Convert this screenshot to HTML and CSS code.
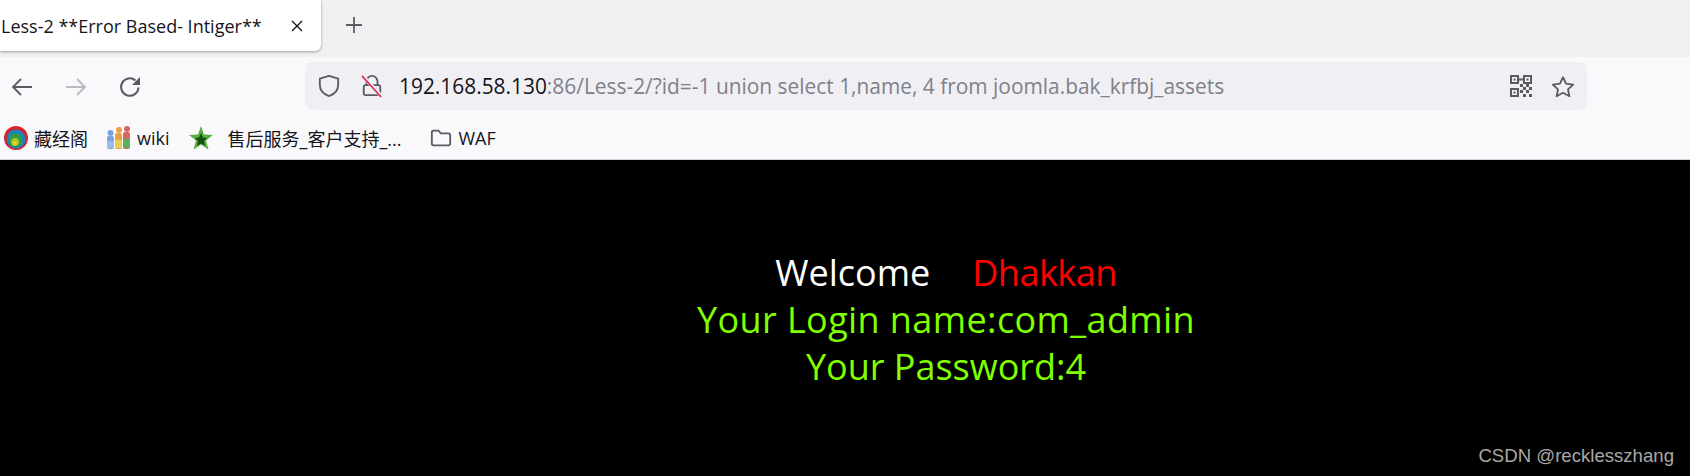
FILE: index.html
```html
<!DOCTYPE html>
<html lang="en">
<head>
    <meta charset="UTF-8">
    <title>Less-2 **Error Based- Intiger**</title>
    <link rel="stylesheet" href="styles.css">
</head>
<body>
    <div class="tab-strip">
        <div class="tab">
            <span class="tab-title">Less-2 **Error Based- Intiger**</span>
            <svg class="tab-close" width="12" height="12" viewBox="0 0 12 12"><path d="M1 1l10 10M11 1L1 11" stroke="#15141a" stroke-width="1.4" fill="none"/></svg>
        </div>
        <svg class="new-tab" width="18" height="18" viewBox="0 0 18 18"><path d="M9 1v16M1 9h16" stroke="#5b5b66" stroke-width="1.8" fill="none"/></svg>
    </div>

    <div class="toolbar">
        <div class="nav-buttons">
            <svg width="22" height="20" viewBox="0 0 22 20"><path d="M21 10H2M10 2l-8 8 8 8" stroke="#5b5b66" stroke-width="1.8" fill="none"/></svg>
            <svg width="22" height="20" viewBox="0 0 22 20"><path d="M1 10h19M12 2l8 8-8 8" stroke="#b9b9bf" stroke-width="1.8" fill="none"/></svg>
            <svg width="22" height="22" viewBox="0 0 22 22"><path d="M19.500 11.500a8.700 8.700 0 1 1-3-7" stroke="#5b5b66" stroke-width="2" fill="none"/><path d="M21 1v8h-8z" fill="#5b5b66"/></svg>
        </div>
        <div class="url-bar">
            <svg width="22" height="24" viewBox="0 0 24 26"><path d="M12 2l10 3v7c0 6-4 10-10 12C6 22 2 18 2 12V5z" stroke="#5b5b66" stroke-width="2" fill="none" stroke-linejoin="round"/></svg>
            <svg class="lock" width="22" height="24" viewBox="0 0 24 26"><path d="M6 12V8a6 6 0 0 1 12 0v4" stroke="#5b5b66" stroke-width="2" fill="none"/><rect x="3" y="12" width="18" height="11" rx="2" stroke="#5b5b66" stroke-width="2" fill="none"/><path d="M1 1l22 24" stroke="#f0f0f4" stroke-width="4"/><path d="M1 2l21 23" stroke="#e22850" stroke-width="1.8"/></svg>
            <div class="url-text"><span class="url-host">192.168.58.130</span>:86/Less-2/?id=-1 union select 1,name, 4 from joomla.bak_krfbj_assets</div>
            <svg width="22" height="22" viewBox="0 0 22 22" fill="#5b5b66"><path fill-rule="evenodd" d="M0 0h9v9H0zM2 2v5h5V2zM13 0h9v9h-9zM15 2v5h5V2zM0 13h9v9H0zM2 15v5h5v-5z"/><path d="M3.500 3.500h2v2h-2zM16.500 3.500h2v2h-2zM3.500 16.500h2v2h-2zM9 3.500h4v2H9zM10 9h3v3h-3zM13 12h3v3h-3zM16 9h3v3h-3zM19 12h3v3h-3zM10 15h3v3h-3zM16 15h3v3h-3zM13 19h3v3h-3zM19 19h3v3h-3z"/></svg>
            <svg class="star" width="24" height="23" viewBox="0 0 26 24"><path d="M13 2l3.300 6.900 7.700 1-5.600 5.200 1.500 7.400L13 18.800l-6.900 3.700 1.500-7.400L2 9.900l7.700-1z" stroke="#5b5b66" stroke-width="2" stroke-linejoin="round" fill="none"/></svg>
        </div>
    </div>

    <div class="bookmarks">
        <div class="bookmark">
            <svg width="24" height="24" viewBox="0 0 24 24"><circle cx="12" cy="12" r="12" fill="#d9232b"/><circle cx="12" cy="13" r="9.500" fill="#1c7fc4"/><circle cx="11.500" cy="14" r="7" fill="#2f9b47"/><circle cx="11" cy="16" r="4" fill="#a8c62c"/><circle cx="11" cy="17" r="2" fill="#e8d92b"/></svg>
            <span>藏经阁</span>
        </div>
        <div class="bookmark">
            <svg width="24" height="24" viewBox="0 0 24 24"><circle cx="3.500" cy="7" r="3" fill="#7aa5dc"/><circle cx="12" cy="4" r="3" fill="#ee9f45"/><circle cx="20" cy="3" r="3" fill="#d9655f"/><rect x="0" y="10" width="7" height="13" rx="2" fill="#7aa5dc"/><rect x="8" y="7" width="7" height="16" rx="2" fill="#ee9f45"/><rect x="16" y="6" width="7" height="17" rx="2" fill="#d9655f"/><rect x="8" y="14" width="7" height="8" fill="#e6cf55"/><rect x="16" y="13" width="7" height="9" fill="#5fae62"/><rect x="0" y="15" width="7" height="7" fill="#9cbbe6"/></svg>
            <span>wiki</span>
        </div>
        <div class="bookmark bookmark-long">
            <svg width="24" height="24" viewBox="0 0 24 24"><path d="M12 0l3 8.500 9 .500-7 5.500 2.500 9L12 18.500 4.500 23.500 7 14.500 0 9l9-.500z" fill="#58ae3e"/><path d="M12 7l2 4.500 4 .500-3 3 1 5-4-2.500L8 20l1-5-3-3 4-.500z" fill="#134f12"/></svg>
            <span>售后服务_客户支持_...</span>
        </div>
        <div class="bookmark">
            <svg width="22" height="20" viewBox="0 0 24 20"><path d="M2 4a2 2 0 0 1 2-2h5l3 3h8a2 2 0 0 1 2 2v9a2 2 0 0 1-2 2H4a2 2 0 0 1-2-2z" stroke="#5b5b66" stroke-width="2" fill="none" stroke-linejoin="round"/></svg>
            <span>WAF</span>
        </div>
    </div>

    <div class="page">
        <div class="message">
            <div><span class="welcome">Welcome</span><span class="name">Dhakkan</span></div>
            <div class="result result-wide">Your Login name:com_admin</div>
            <div class="result">Your Password:4</div>
        </div>
        <div class="watermark">CSDN @recklesszhang</div>
    </div>
</body>
</html>
```

FILE: styles.css
```css
html, body {
    margin: 0;
    padding: 0;
}

body {
    width: 1690px;
    height: 476px;
    overflow: hidden;
    display: flex;
    flex-direction: column;
    font-family: 'Open Sans', 'Noto Sans CJK SC', sans-serif;
    background-color: #000000;
}

.tab-strip {
    height: 57px;
    flex: none;
    display: flex;
    align-items: flex-start;
    background-color: #f0f0f0;
}

.tab {
    width: 321px;
    height: 51px;
    box-sizing: border-box;
    padding: 0 18px 0 1px;
    display: flex;
    align-items: center;
    justify-content: space-between;
    background-color: #ffffff;
    border-radius: 0 0 6px 0;
    box-shadow: 0 1px 3px rgba(0, 0, 0, 0.35);
}

.tab-title {
    font-size: 18px;
    color: #15141a;
    white-space: nowrap;
}

.new-tab {
    margin: 16px 0 0 24px;
}

.toolbar {
    height: 58px;
    flex: none;
    display: flex;
    align-items: center;
    background-color: #f9f9fb;
}

.nav-buttons {
    width: 305px;
    flex: none;
    box-sizing: border-box;
    padding: 2px 0 0 11px;
    display: flex;
    align-items: center;
    gap: 32px;
}

.url-bar {
    width: 1282px;
    height: 48px;
    box-sizing: border-box;
    padding: 0 12px 0 13px;
    display: flex;
    align-items: center;
    background-color: #f0f0f4;
    border-radius: 8px;
}

.lock {
    margin-left: 21px;
}

.url-text {
    flex: 1;
    margin-left: 16px;
    font-size: 20.9px;
    color: #80808a;
    white-space: nowrap;
}

.url-host {
    color: #15141a;
}

.star {
    margin-left: 19px;
}

.bookmarks {
    height: 45px;
    flex: none;
    box-sizing: border-box;
    padding: 1px 0 0 4px;
    display: flex;
    align-items: center;
    gap: 19px;
    background-color: #f9f9fb;
    border-bottom: 1px solid #cfcfd8;
    font-size: 18px;
    color: #15141a;
}

.bookmark {
    display: flex;
    align-items: center;
    gap: 6px;
}

.bookmark-long {
    gap: 15px;
    margin-right: 10px;
}

.page {
    flex: 1;
    position: relative;
    padding: 89px 0 0 202px;
    background-color: #000000;
    text-align: center;
    font-size: 36px;
    line-height: 47px;
}

.welcome {
    color: #ffffff;
    margin-right: 42px;
}

.name {
    color: #ff0000;
    letter-spacing: -0.5px;
}

.result {
    color: #7fff00;
}

.result-wide {
    letter-spacing: 0.4px;
}

.watermark {
    position: absolute;
    right: 16px;
    bottom: 8px;
    font-family: 'Liberation Sans', sans-serif;
    font-size: 18.6px;
    line-height: 24px;
    color: #a8a8a8;
}
```
